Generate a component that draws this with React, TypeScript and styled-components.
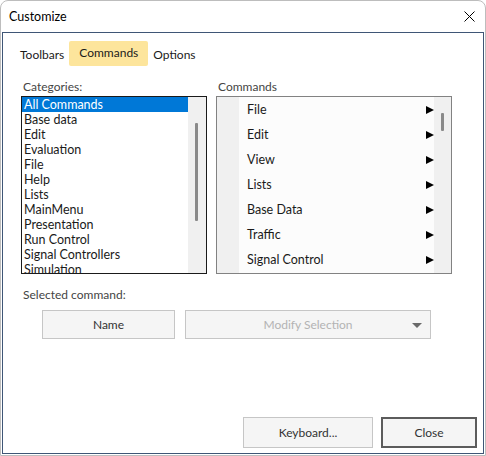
import * as React from 'react';
import styled, {createGlobalStyle} from 'styled-components';

const GlobalStyle = createGlobalStyle`
  html, body {
    margin: 0;
    padding: 0;
    background: #ffffff;
  }
  body {
    font-family: Lato, "Noto Sans", Arial, sans-serif;
    font-size: 12.5px;
    color: #1a1a1a;
  }
  * { box-sizing: border-box; }
`;

const Window = styled.div`
  width: 486px;
  height: 456px;
  display: flex;
  flex-direction: column;
  background: #ffffff;
  border: 1px solid #bdbdbd;
  border-radius: 8px 8px 0 0;
  overflow: hidden;
`;

const TitleBar = styled.div`
  height: 31px;
  display: flex;
  align-items: center;
  justify-content: space-between;
  padding: 0 10px 0 8px;
`;

const Title = styled.span`
  color: #000;
`;

const Frame = styled.div`
  flex: 1;
  margin: 0 1px 1px 1px;
  border: 1px solid #3f5676;
  display: flex;
  flex-direction: column;
  padding-top: 8px;
`;

const Tabs = styled.div`
  display: flex;
  align-items: flex-start;
  margin-left: 12px;
  height: 25px;
`;

const Tab = styled.div<{ $active?: boolean }>`
  height: 25px;
  font-size: 12px;
  line-height: ${p => (p.$active ? '23px' : '27px')};
  padding: ${p => (p.$active ? '0 10px' : '0 5px')};
  background: ${p => (p.$active ? '#fde59c' : 'transparent')};
  border-radius: 2px;
  color: #1a1a1a;
`;

const Lists = styled.div`
  display: flex;
  gap: 9px;
  margin: 13px 0 0 18px;
`;

const Column = styled.div<{ $width: number }>`
  width: ${p => p.$width}px;
  display: flex;
  flex-direction: column;
`;

const Label = styled.div`
  height: 17px;
  line-height: 16px;
  padding-left: 2px;
  font-size: 12px;
  color: #444;
`;

const ListBox = styled.div<{ $border: string }>`
  height: 178px;
  border: 1px solid ${p => p.$border};
  display: flex;
  overflow: hidden;
`;

const Items = styled.div`
  flex: 1;
  display: flex;
  flex-direction: column;
  overflow: hidden;
`;

const CategoryItem = styled.div<{ $selected?: boolean }>`
  height: 15px;
  line-height: 15px;
  flex-shrink: 0;
  padding-left: 2px;
  white-space: nowrap;
  background: ${p => (p.$selected ? '#0078d7' : 'transparent')};
  color: ${p => (p.$selected ? '#ffffff' : '#1a1a1a')};
`;

const ScrollTrack = styled.div<{ $width: number }>`
  width: ${p => p.$width}px;
  background: #f0f0f0;
  position: relative;
`;

const Thumb = styled.div<{ $left: number; $top: number; $height: number; $color: string }>`
  position: absolute;
  left: ${p => p.$left}px;
  top: ${p => p.$top}px;
  width: 3px;
  height: ${p => p.$height}px;
  background: ${p => p.$color};
  border-radius: 1px;
`;

const Gutter = styled.div`
  width: 22px;
  background: #f0f0f0;
`;

const MenuItems = styled.div`
  flex: 1;
  background: #fcfcfc;
  display: flex;
  flex-direction: column;
  overflow: hidden;
`;

const MenuItem = styled.div`
  height: 25px;
  flex-shrink: 0;
  display: flex;
  align-items: center;
  justify-content: space-between;
  padding-left: 8px;
  color: #1a1a1a;
`;

const Arrow = styled.span`
  width: 0;
  height: 0;
  border-top: 4.5px solid transparent;
  border-bottom: 4.5px solid transparent;
  border-left: 8px solid #000;
`;

const Selected = styled.div`
  margin: 13px 0 0 20px;
  display: flex;
  flex-direction: column;
`;

const SelectedLabel = styled.div`
  height: 17px;
  line-height: 16px;
  font-size: 12px;
  color: #444;
`;

const SelectedRow = styled.div`
  display: flex;
  gap: 10px;
  margin: 6px 0 0 19px;
`;

const Button = styled.button<{ $width: number; $height: number; $strong?: boolean }>`
  width: ${p => p.$width}px;
  height: ${p => p.$height}px;
  background: #f5f5f5;
  border: ${p => (p.$strong ? '2px solid #5c5c5c' : '1px solid #c6c6c6')};
  font-family: inherit;
  font-size: 12px;
  color: #333;
  padding: 0;
  cursor: default;
`;

const Dropdown = styled.div`
  width: 246px;
  height: 29px;
  background: #f5f5f5;
  border: 1px solid #c6c6c6;
  position: relative;
  display: flex;
  align-items: center;
  justify-content: center;
  font-size: 12px;
  color: #b3b3b3;
`;

const DropArrow = styled.span`
  position: absolute;
  right: 8px;
  top: 12px;
  width: 0;
  height: 0;
  border-left: 5px solid transparent;
  border-right: 5px solid transparent;
  border-top: 5px solid #6a6a6a;
`;

const Footer = styled.div`
  margin-top: auto;
  display: flex;
  justify-content: flex-end;
  gap: 8px;
  padding: 0 6px 5px 0;
`;

const CloseIcon = () => (
  <svg width="11" height="11" viewBox="0 0 11 11">
    <path d="M0.5 0.5 L10.5 10.5 M10.5 0.5 L0.5 10.5" stroke="#000" strokeWidth="1" fill="none" />
  </svg>
);

const categories = [
  'All Commands', 'Base data', 'Edit', 'Evaluation', 'File', 'Help', 'Lists',
  'MainMenu', 'Presentation', 'Run Control', 'Signal Controllers', 'Simulation',
];

const commands = ['File', 'Edit', 'View', 'Lists', 'Base Data', 'Traffic', 'Signal Control'];

export default function App() {
  return (
    <>
      <GlobalStyle />
      <Window>
        <TitleBar>
          <Title>Customize</Title>
          <CloseIcon />
        </TitleBar>
        <Frame>
          <Tabs>
            <Tab>Toolbars</Tab>
            <Tab $active>Commands</Tab>
            <Tab>Options</Tab>
          </Tabs>
          <Lists>
            <Column $width={186}>
              <Label>Categories:</Label>
              <ListBox $border="#1a1a1a">
                <Items>
                  {categories.map((c, i) => (
                    <CategoryItem key={c} $selected={i === 0}>{c}</CategoryItem>
                  ))}
                </Items>
                <ScrollTrack $width={18}>
                  <Thumb $left={7} $top={26} $height={98} $color="#8a8a8a" />
                </ScrollTrack>
              </ListBox>
            </Column>
            <Column $width={236}>
              <Label>Commands</Label>
              <ListBox $border="#828282">
                <Gutter />
                <MenuItems>
                  {commands.map(c => (
                    <MenuItem key={c}>
                      {c}
                      <Arrow />
                    </MenuItem>
                  ))}
                </MenuItems>
                <ScrollTrack $width={17}>
                  <Thumb $left={7} $top={16} $height={18} $color="#8a8a8a" />
                </ScrollTrack>
              </ListBox>
            </Column>
          </Lists>
          <Selected>
            <SelectedLabel>Selected command:</SelectedLabel>
            <SelectedRow>
              <Button $width={133} $height={29}>Name</Button>
              <Dropdown>
                Modify Selection
                <DropArrow />
              </Dropdown>
            </SelectedRow>
          </Selected>
          <Footer>
            <Button $width={130} $height={31}>Keyboard...</Button>
            <Button $width={96} $height={31} $strong>Close</Button>
          </Footer>
        </Frame>
      </Window>
    </>
  );
}
